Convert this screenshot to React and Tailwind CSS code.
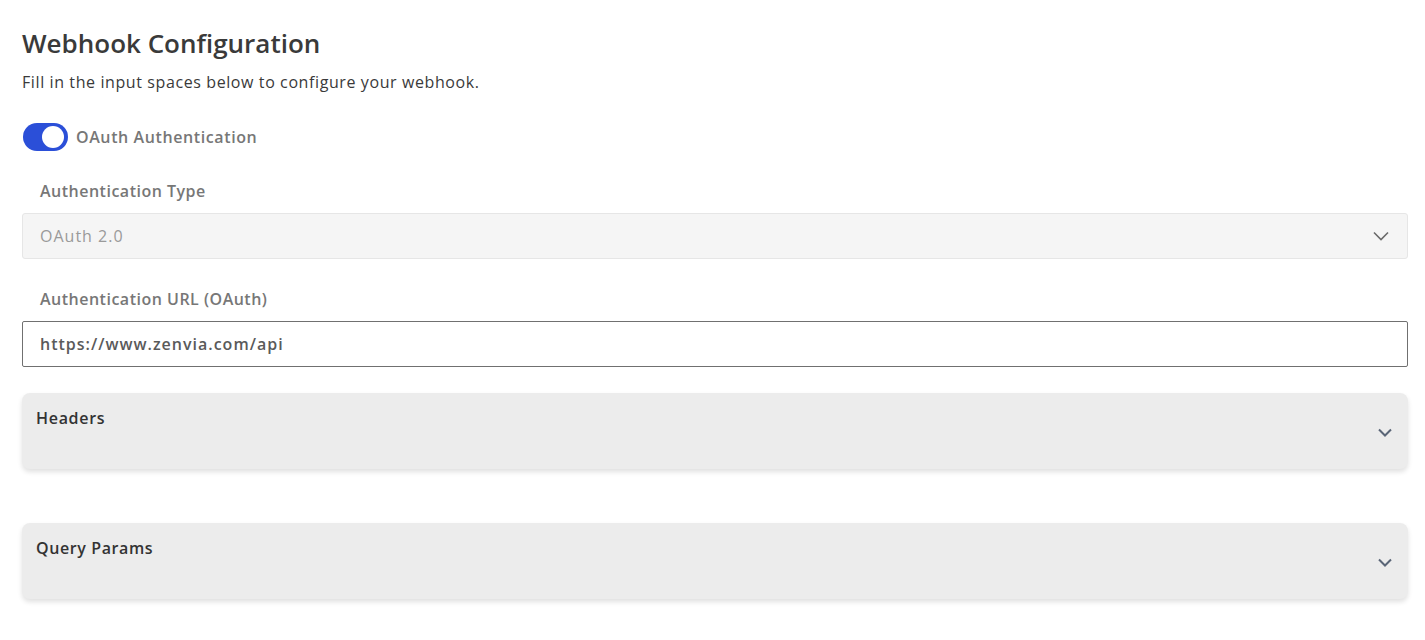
export default function App() {
  return (
    <div className="min-h-[640px] bg-white pl-[22px] pr-[17px] pt-[26px] text-[#333] font-['Open_Sans',sans-serif]">
      <h1 className="text-[26px] leading-[34px] font-semibold text-[#3a3a3a]">Webhook Configuration</h1>
      <p className="mt-[10px] text-[16px] leading-[24px] text-[#3a3a3a] tracking-[0.6px]">
        Fill in the input spaces below to configure your webhook.
      </p>

      <div className="mt-[29px] flex items-center gap-2 pl-[1px]">
        <button type="button" className="relative h-[28px] w-[45px] rounded-full bg-[#2b4fd8]">
          <span className="absolute right-[4px] top-[3px] h-[22px] w-[22px] rounded-full bg-white" />
        </button>
        <span className="text-[16px] font-semibold text-[#777] tracking-[0.6px]">OAuth Authentication</span>
      </div>

      <label className="mt-[28px] block pl-[18px] text-[16px] font-semibold text-[#777] tracking-[0.5px]">Authentication Type</label>
      <div className="mt-[10px] flex h-[46px] items-center justify-between rounded-[3px] border border-[#e6e6e6] bg-[#f5f5f5] pl-[17px] pr-[18px]">
        <span className="text-[16px] text-[#9a9a9a] tracking-[1px]">OAuth 2.0</span>
        <svg width="16" height="10" viewBox="0 0 16 10" fill="none" stroke="#6a6a6a" strokeWidth="1.6">
          <path d="M1 1.5l7 7 7-7" />
        </svg>
      </div>

      <label className="mt-[28px] block pl-[18px] text-[16px] font-semibold text-[#777] tracking-[0.5px]">Authentication URL (OAuth)</label>
      <div className="mt-[10px] flex h-[46px] items-center rounded-[2px] border border-[#707070] bg-white pl-[17px]">
        <span className="text-[16px] font-semibold text-[#5a5a5a] tracking-[1px]">https://www.zenvia.com/api</span>
      </div>

      <div className="mt-[26px] flex h-[76px] justify-between rounded-[8px] bg-[#ececec] pl-[14px] pr-[16px] pt-[13px] shadow-[0_3px_5px_rgba(0,0,0,0.12)]">
        <span className="text-[16px] font-semibold text-[#333] tracking-[0.7px]">Headers</span>
        <svg className="mt-[22px]" width="14" height="9" viewBox="0 0 14 9" fill="none" stroke="#5a6577" strokeWidth="2">
          <path d="M1 1.5l6 6 6-6" />
        </svg>
      </div>

      <div className="mt-[54px] flex h-[76px] justify-between rounded-[8px] bg-[#ececec] pl-[14px] pr-[16px] pt-[13px] shadow-[0_3px_5px_rgba(0,0,0,0.12)]">
        <span className="text-[16px] font-semibold text-[#333] tracking-[0.6px]">Query Params</span>
        <svg className="mt-[22px]" width="14" height="9" viewBox="0 0 14 9" fill="none" stroke="#5a6577" strokeWidth="2">
          <path d="M1 1.5l6 6 6-6" />
        </svg>
      </div>
    </div>
  );
}
